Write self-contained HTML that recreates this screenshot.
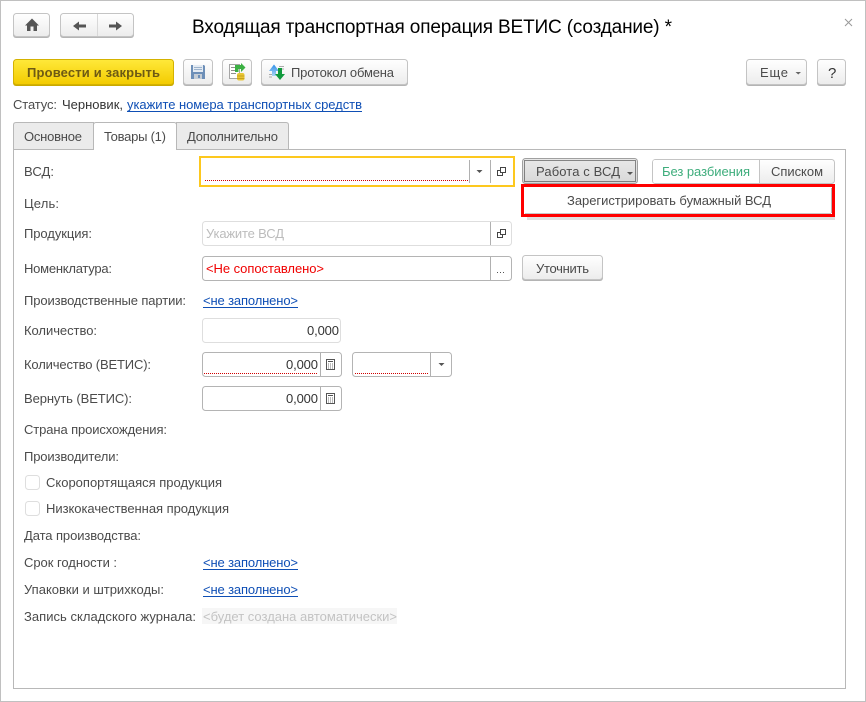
<!DOCTYPE html>
<html><head><meta charset="utf-8"><style>
html,body{margin:0;padding:0;background:#fff;width:866px;height:702px;overflow:hidden}
svg{display:block;font-family:"Liberation Sans",sans-serif;font-size:13px;fill:#4b4b4b}
.b{fill:url(#g);stroke:#c4c4c4}
.s{fill:#b4b4b4}
.f{fill:#fff;stroke:#b4b4b4}
.l{fill:#fff;stroke:#dedede}
.d{stroke:#b0b0b0}
.r{stroke:#d00000;stroke-dasharray:1 1;stroke-width:1}
.a{fill:#0f4fb5}
.u{stroke:#0f4fb5}
.dk{fill:#555}
</style></head><body>
<svg width="866" height="702" viewBox="0 0 866 702" xmlns="http://www.w3.org/2000/svg">
<defs>
<linearGradient id="g" x1="0" y1="0" x2="0" y2="1"><stop offset="0" stop-color="#fff"/><stop offset="1" stop-color="#ececec"/></linearGradient>
<linearGradient id="y" x1="0" y1="0" x2="0" y2="1"><stop offset="0" stop-color="#ffe93a"/><stop offset="1" stop-color="#f3cb00"/></linearGradient>
<linearGradient id="p" x1="0" y1="0" x2="0" y2="1"><stop offset="0" stop-color="#e9e9e9"/><stop offset="1" stop-color="#d8d8d8"/></linearGradient>
<linearGradient id="bl" x1="0" y1="0" x2="0" y2="1"><stop offset="0" stop-color="#2f8fe8"/><stop offset="1" stop-color="#a9d4f5"/></linearGradient>
</defs>
<rect x="0.5" y="0.5" width="865" height="701" fill="#fff" stroke="#c0c0c0"/>

<!-- top nav -->
<rect x="13" y="14" width="37" height="24" rx="3" class="s"/>
<rect x="13.5" y="13.5" width="36" height="23" rx="3" class="b"/>
<path d="M32 18.500 L39 25.500 H37 V31 H33.500 V26.500 H30.500 V31 H27 V25.500 H25 Z" class="dk"/>
<rect x="60" y="14" width="74" height="24" rx="3" class="s"/>
<rect x="60.5" y="13.5" width="73" height="23" rx="3" class="b"/>
<path d="M97.5 14 V36" stroke="#d8d8d8"/>
<path d="M73 26 L79 21.500 V24.500 H86 V27.500 H79 V30.500 Z" class="dk"/>
<path d="M122 26 L116 21.500 V24.500 H109 V27.500 H116 V30.500 Z" class="dk"/>

<text x="192" y="33" style="font-size:19px;fill:#000" textLength="480">Входящая транспортная операция ВЕТИС (создание) *</text>
<path d="M845 19 L852 26 M852 19 L845 26" stroke="#999" fill="none"/>

<!-- command bar -->
<rect x="13" y="60" width="161" height="26" rx="3" fill="#c9a900"/>
<rect x="13.500" y="59.500" width="160" height="25" rx="3" fill="url(#y)" stroke="#d4b200"/>
<text x="27" y="77" style="font-weight:bold;fill:#6e5a14" textLength="133">Провести и закрыть</text>

<rect x="183" y="60" width="30" height="26" rx="3" class="s"/>
<rect x="183.500" y="59.500" width="29" height="25" rx="3" class="b"/>
<path d="M191 65 H204 L205 66 V79 H191 Z" fill="#6d8fb8"/>
<rect x="193" y="65" width="10" height="7" fill="#e4ebf3"/>
<path d="M194 67.500 H202 M194 69.500 H202" stroke="#9db3cc"/>
<rect x="194" y="74" width="8" height="5" fill="#c5cdd6"/>
<rect x="198" y="75" width="2" height="3" fill="#6d8fb8"/>

<rect x="222" y="60" width="30" height="26" rx="3" class="s"/>
<rect x="222.500" y="59.500" width="29" height="25" rx="3" class="b"/>
<rect x="229.500" y="64.500" width="10" height="14" fill="#fff" stroke="#a5a5a5"/>
<path d="M231 67.500 H235 M231 70.500 H236 M231 73.500 H236" stroke="#8f8f8f"/>
<path d="M235 65 H241 V63 L245.500 67.500 L241 72 V69 H238.500 V72 H235 Z" fill="#3bb043"/>
<rect x="237" y="73" width="7.500" height="7.500" rx="2" fill="#e9c635"/>
<path d="M237 76 H244.500 M237 78.500 H244.500" stroke="#c7a21f"/>

<rect x="261" y="60" width="147" height="26" rx="3" class="s"/>
<rect x="261.500" y="59.500" width="146" height="25" rx="3" class="b"/>
<path d="M279 66.500 H284 M279 69 H284 M269 74.500 H272 M269 77 H272" stroke="#aaa"/>
<path d="M274 64.500 L279 71 H276 V76 H272 V71 H269 Z" fill="url(#bl)"/>
<path d="M278 68 H282 V74 H285 L280 80 L275 74 H278 Z" fill="#119a3d"/>
<text x="291" y="77" textLength="103">Протокол обмена</text>

<rect x="746" y="60" width="61" height="26" rx="3" class="s"/>
<rect x="746.500" y="59.500" width="60" height="25" rx="3" class="b"/>
<text x="760" y="77" textLength="28">Еще</text>
<path d="M795.500 72 H801 L798.250 74.500 Z" fill="#666"/>
<rect x="817" y="60" width="29" height="26" rx="3" class="s"/>
<rect x="817.500" y="59.500" width="28" height="25" rx="3" class="b"/>
<text x="828" y="78" style="font-size:15px;fill:#333" textLength="8">?</text>

<!-- status -->
<text x="13" y="109" textLength="44">Статус:</text>
<text x="62" y="109" style="fill:#333" textLength="61">Черновик,</text>
<text x="127" y="109" class="a" textLength="235">укажите номера транспортных средств</text>
<path d="M127 111.500 H362" class="u"/>

<!-- panel and tabs -->
<rect x="13.500" y="149.500" width="832" height="539" fill="#fff" stroke="#b8b8b8"/>
<path d="M13.500 149.500 V125 Q13.500 122.500 16 122.500 H93.500 V149.500 Z" fill="#ebebeb" stroke="#b8b8b8"/>
<path d="M176.500 149.500 V122.500 H286 Q288.500 122.500 288.500 125 V149.500 Z" fill="#ebebeb" stroke="#b8b8b8"/>
<path d="M93.500 150 V125 Q93.500 122.500 96 122.500 H174 Q176.500 122.500 176.500 125 V150" fill="#fff" stroke="#b8b8b8"/>
<rect x="94" y="149" width="82" height="2" fill="#fff"/>
<text x="24" y="141" textLength="58">Основное</text>
<text x="104" y="141" textLength="62">Товары (1)</text>
<text x="187" y="141" textLength="91">Дополнительно</text>

<!-- labels -->
<text x="24" y="176" textLength="30">ВСД:</text>
<text x="24" y="208" textLength="35">Цель:</text>
<text x="24" y="238" textLength="68">Продукция:</text>
<text x="24" y="273" textLength="88">Номенклатура:</text>
<text x="24" y="305" textLength="162">Производственные партии:</text>
<text x="24" y="335" textLength="73">Количество:</text>
<text x="24" y="369" textLength="127">Количество (ВЕТИС):</text>
<text x="24" y="403" textLength="108">Вернуть (ВЕТИС):</text>
<text x="24" y="434" textLength="143">Страна происхождения:</text>
<text x="24" y="461" textLength="95">Производители:</text>
<text x="46" y="487" textLength="176">Скоропортящаяся продукция</text>
<text x="46" y="513" textLength="183">Низкокачественная продукция</text>
<text x="24" y="540" textLength="117">Дата производства:</text>
<text x="24" y="567" textLength="93">Срок годности :</text>
<text x="24" y="594" textLength="140">Упаковки и штрихкоды:</text>
<text x="24" y="621" textLength="172">Запись складского журнала:</text>

<!-- ВСД field -->
<rect x="200" y="157" width="314" height="29" fill="#fff" stroke="#fdc81e" stroke-width="2"/>
<path d="M205 180.500 H468" class="r"/>
<path d="M469.500 160 V183 M490.500 160 V183" class="d"/>
<path d="M476.500 170 H482.500 L479.500 173 Z" fill="#555"/>
<g id="cp" fill="none" stroke="#444"><rect x="500.500" y="167.500" width="5" height="5" fill="#fff"/><path d="M500.500 170.500 H497.500 V175.500 H502.500 V172.500"/></g>

<!-- Продукция -->
<rect x="202.500" y="221.500" width="309" height="24" rx="3" class="l"/>
<path d="M490.500 222 V245" class="d"/>
<text x="206" y="238" style="fill:#bcbcbc" textLength="78">Укажите ВСД</text>
<use href="#cp" y="62"/>

<!-- Номенклатура -->
<rect x="202.500" y="256.500" width="309" height="24" rx="3" class="f"/>
<path d="M490.500 257 V280" class="d"/>
<text x="206" y="273" style="fill:#f00000" textLength="118">&lt;Не сопоставлено&gt;</text>
<path d="M497 272.500 H498 M500 272.500 H501 M503 272.500 H504" stroke="#555"/>
<rect x="522" y="256" width="81" height="25" rx="3" class="s"/>
<rect x="522.500" y="255.500" width="80" height="24" rx="3" class="b"/>
<text x="536" y="273" textLength="53">Уточнить</text>

<!-- Партии -->
<text x="203" y="305" class="a" textLength="95">&lt;не заполнено&gt;</text>
<path d="M203 307.500 H298" class="u"/>

<!-- Количество -->
<rect x="202.500" y="318.500" width="138" height="24" rx="3" class="l"/>
<text x="307" y="335" style="fill:#333" textLength="32">0,000</text>

<rect x="202.500" y="352.500" width="139" height="24" rx="3" class="f"/>
<path d="M320.500 353 V376" class="d"/>
<path d="M204 373.500 H318" class="r"/>
<text x="286" y="369" style="fill:#333" textLength="32">0,000</text>
<g id="c"><rect x="326.500" y="359.500" width="8" height="10" fill="#fff" stroke="#555"/><path d="M328 361.500 H333" stroke="#555"/><path d="M328 364 H333 M328 366 H333 M328 368 H333" stroke="#777" stroke-dasharray="1 1"/></g>

<rect x="352.500" y="352.500" width="99" height="24" rx="3" class="f"/>
<path d="M430.500 353 V376" class="d"/>
<path d="M355 373.500 H428" class="r"/>
<path d="M438.500 363 H444.500 L441.500 366 Z" fill="#555"/>

<rect x="202.500" y="386.500" width="139" height="24" rx="3" class="f"/>
<path d="M320.500 387 V410" class="d"/>
<text x="286" y="403" style="fill:#333" textLength="32">0,000</text>
<use href="#c" y="34"/>

<!-- Checkboxes -->
<rect x="25.500" y="475.500" width="14" height="14" rx="3" fill="#fff" stroke="#dedede"/>
<rect x="25.500" y="501.500" width="14" height="14" rx="3" fill="#fff" stroke="#dedede"/>

<!-- Links -->
<text x="203" y="567" class="a" textLength="95">&lt;не заполнено&gt;</text>
<path d="M203 569.500 H298" class="u"/>
<text x="203" y="594" class="a" textLength="95">&lt;не заполнено&gt;</text>
<path d="M203 596.500 H298" class="u"/>
<rect x="202" y="608" width="195" height="16" fill="#f6f6f6"/>
<text x="203" y="621" style="fill:#c3c3c3" textLength="194">&lt;будет создана автоматически&gt;</text>

<!-- Работа с ВСД -->
<rect x="522.500" y="158.500" width="115" height="25" rx="3" fill="url(#p)" stroke="#a0a0a0"/>
<rect x="524.500" y="160.500" width="111" height="21" fill="none" stroke="#222" stroke-dasharray="1 1"/>
<text x="536" y="176" textLength="84">Работа с ВСД</text>
<path d="M627 172 H633 L630 175 Z" fill="#555"/>

<!-- Без разбиения / Списком -->
<rect x="652.500" y="159.500" width="182" height="24" rx="3" fill="url(#g)" stroke="#c4c4c4"/>
<path d="M655 160 H759 V183 H655 Q653 183 653 181 V162 Q653 160 655 160 Z" fill="#fff"/>
<path d="M759.500 160 V183" stroke="#c4c4c4"/>
<text x="662" y="176" style="fill:#3ead7c" textLength="88">Без разбиения</text>
<text x="771" y="176" textLength="52">Списком</text>

<!-- Popup -->
<rect x="527" y="216" width="308" height="4" fill="#000" opacity=".12"/>
<rect x="522.500" y="185.500" width="311" height="30" fill="#fff" stroke="#f00" stroke-width="3"/>
<path d="M831.500 188 V213" stroke="#b5b5b5"/>
<path d="M525 213.500 H831" stroke="#c8c8c8"/>
<text x="567" y="205" textLength="204">Зарегистрировать бумажный ВСД</text>
</svg>
</body></html>
